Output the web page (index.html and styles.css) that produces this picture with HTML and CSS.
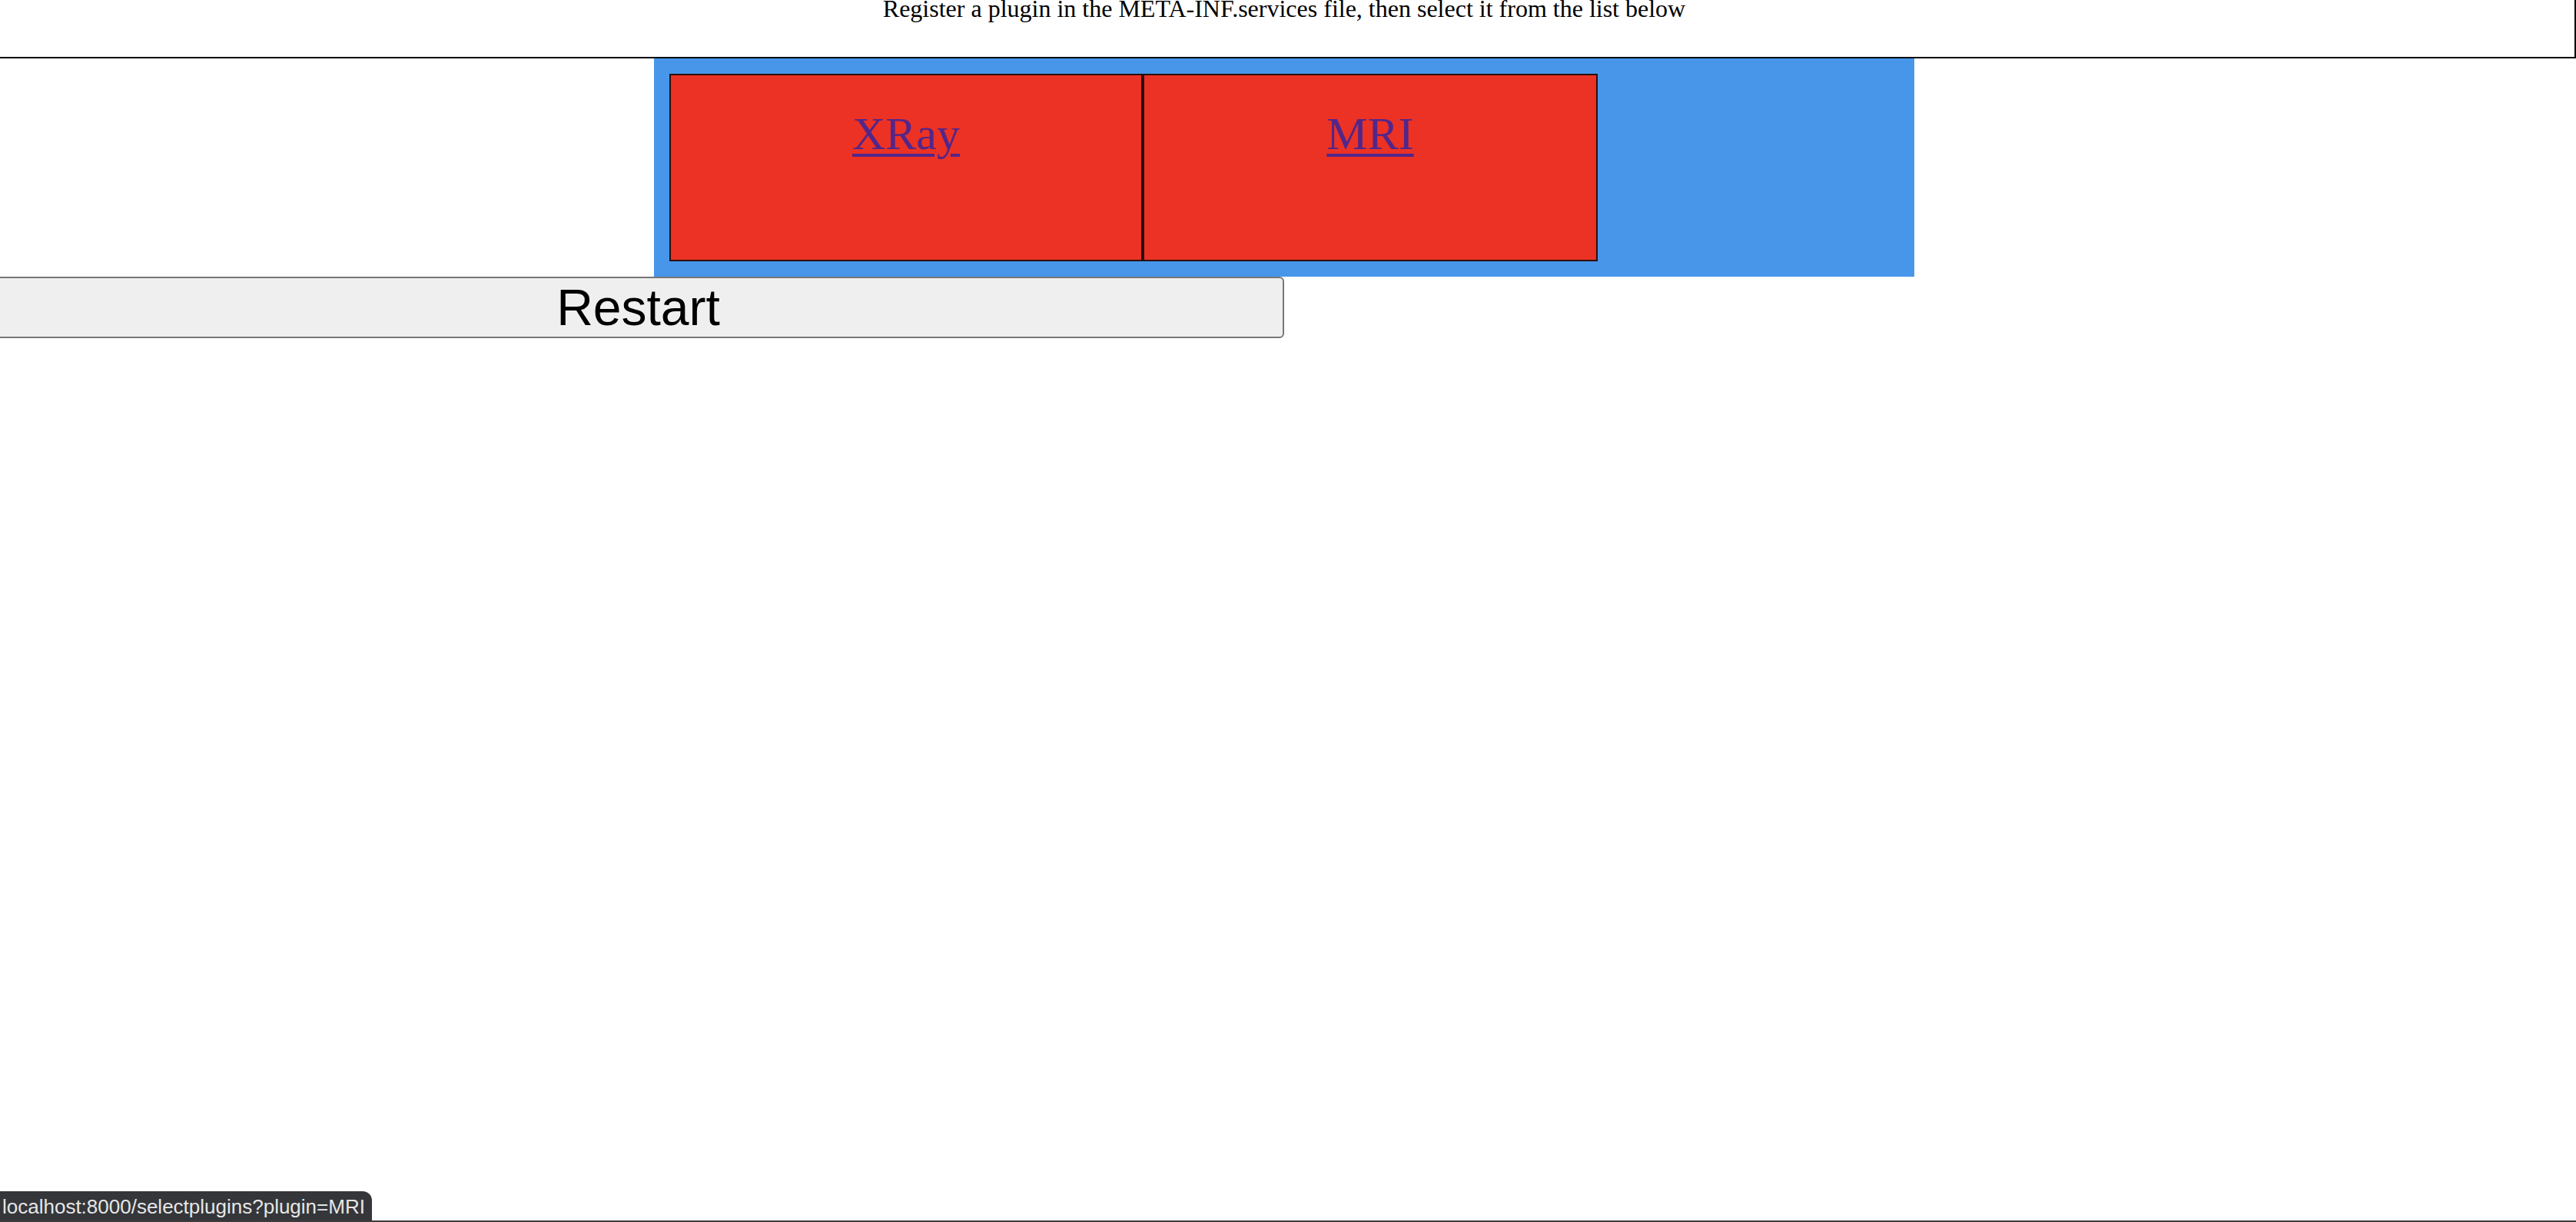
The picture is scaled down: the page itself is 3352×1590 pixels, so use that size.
FILE: index.html
```html
<!DOCTYPE html>
<html lang="en">
<head>
<meta charset="utf-8">
<title>Select plugins</title>
<link rel="stylesheet" href="styles.css">
</head>
<body>
<div class="page">
  <div class="header">Register a plugin in the META-INF.services file, then select it from the list below</div>
  <div class="panel">
    <div class="plugins">
      <div class="cell cell-xray"><a class="plugin-link" href="selectplugins?plugin=XRay">XRay</a></div>
      <div class="cell cell-mri"><a class="plugin-link" href="selectplugins?plugin=MRI">MRI</a></div>
    </div>
  </div>
  <button class="restart" type="button">Restart</button>
</div>
<div class="status">localhost:8000/selectplugins?plugin=MRI</div>
<div class="frame-bottom"></div>
</body>
</html>
```

FILE: styles.css
```css
html, body {
  margin: 0;
  padding: 0;
  background: #ffffff;
  overflow: hidden;
}

.page {
  margin: -9px 0 0 -10px;
  width: 3362px;
  font-family: "Liberation Serif", "Times New Roman", serif;
}

.header {
  box-sizing: border-box;
  width: 100%;
  height: 85px;
  border: 2px solid #000000;
  font-size: 32px;
  text-align: center;
  color: #000000;
}

.panel {
  box-sizing: border-box;
  width: 1640px;
  height: 284px;
  margin: 0 auto;
  padding: 20px;
  background: #4796e9;
}

.plugins {
  display: flex;
}

.cell {
  box-sizing: border-box;
  height: 244px;
  border: 2px solid #2b100e;
  background: #ec3224;
  text-align: center;
  padding-top: 42px;
}

.cell-xray {
  width: 616px;
}

.cell-mri {
  width: 592px;
}

.plugin-link {
  font-size: 60px;
  color: #52268a;
  text-decoration: underline;
  text-decoration-thickness: 4px;
  text-underline-offset: 6px;
}

.restart {
  display: block;
  box-sizing: border-box;
  width: 50%;
  height: 80px;
  margin: 0;
  padding: 0;
  border: 2px solid #767676;
  border-radius: 6px;
  background: #efefef;
  color: #000000;
  font-family: "Liberation Sans", Arial, sans-serif;
  font-size: 66px;
  line-height: 76px;
}

.status {
  position: fixed;
  left: 0;
  bottom: 0;
  box-sizing: border-box;
  width: 484px;
  height: 40px;
  padding: 0 0 0 3px;
  background: #35363a;
  border-top-right-radius: 12px;
  color: #e6e6e6;
  font-family: "Liberation Sans", Arial, sans-serif;
  font-size: 26px;
  line-height: 40px;
  white-space: nowrap;
}

.frame-bottom {
  position: fixed;
  left: 0;
  right: 0;
  bottom: 0;
  height: 2px;
  background: #3c3c3c;
}
```
